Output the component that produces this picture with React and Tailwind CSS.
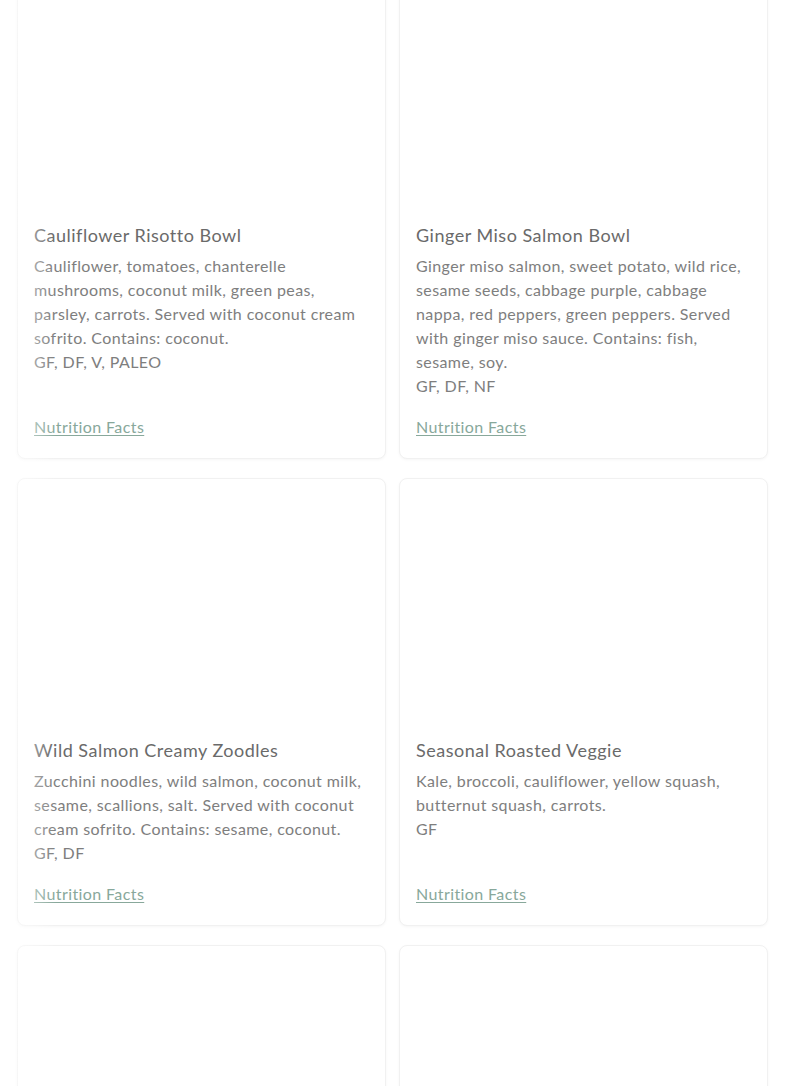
import React from "react";

const items = [
  {
    title: "Cauliflower Risotto Bowl",
    desc: "Cauliflower, tomatoes, chanterelle mushrooms, coconut milk, green peas, parsley, carrots. Served with coconut cream sofrito. Contains: coconut.",
    tags: "GF, DF, V, PALEO",
  },
  {
    title: "Ginger Miso Salmon Bowl",
    desc: "Ginger miso salmon, sweet potato, wild rice, sesame seeds, cabbage purple, cabbage nappa, red peppers, green peppers. Served with ginger miso sauce. Contains: fish, sesame, soy.",
    tags: "GF, DF, NF",
  },
  {
    title: "Wild Salmon Creamy Zoodles",
    desc: "Zucchini noodles, wild salmon, coconut milk, sesame, scallions, salt. Served with coconut cream sofrito. Contains: sesame, coconut.",
    tags: "GF, DF",
  },
  {
    title: "Seasonal Roasted Veggie",
    desc: "Kale, broccoli, cauliflower, yellow squash, butternut squash, carrots.",
    tags: "GF",
  },
  { title: "", desc: "", tags: "" },
  { title: "", desc: "", tags: "" },
];

function Card({ item }) {
  return (
    <div className="flex flex-col rounded-lg border border-[#f1f1f1] bg-white shadow-[0_1px_3px_rgba(0,0,0,0.04)]">
      <div className="h-[241px] shrink-0" />
      {item.title && (
        <div className="flex flex-1 flex-col px-4 pb-[19px] pt-4">
          <h3 className="mb-[5px] text-[18px] leading-[28px] tracking-[0.5px] text-[#6a6a6a]">{item.title}</h3>
          <p className="text-[16px] leading-[24px] tracking-[0.4px] text-[#7e7e7e]">{item.desc}</p>
          <p className="text-[16px] leading-[24px] tracking-[0.4px] text-[#7e7e7e]">{item.tags}</p>
          <div className="mt-auto pt-[17px]">
            <a href="#" className="text-[16px] leading-[24px] tracking-[0.4px] text-[#88a89b] underline underline-offset-2">
              Nutrition Facts
            </a>
          </div>
        </div>
      )}
      {!item.title && <div className="h-[220px]" />}
    </div>
  );
}

export default function App() {
  return (
    <div
      className="relative min-h-[1086px] overflow-hidden bg-white"
      style={{ fontFamily: "Lato, 'Open Sans', sans-serif" }}
    >
      <div className="mt-[-37px] grid grid-cols-2 gap-x-[13px] gap-y-[19px] px-[17px]">
        {items.map((it, i) => (
          <Card key={i} item={it} />
        ))}
      </div>
      <div className="pointer-events-none absolute inset-y-0 left-0 w-[56px] bg-gradient-to-r from-white/40 via-white/40 to-white/0" />
    </div>
  );
}
